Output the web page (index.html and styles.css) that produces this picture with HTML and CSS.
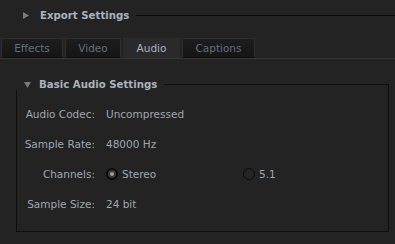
FILE: index.html
```html
<!DOCTYPE html>
<html lang="en">
<head>
    <meta charset="UTF-8">
    <title>Export Settings</title>
    <link rel="stylesheet" href="styles.css">
</head>
<body>
    <div class="header">
        <svg class="tri" width="6" height="7" viewBox="0 0 6 7"><polygon points="0,0 6,3.5 0,7" fill="#7a7a7a"/></svg>
        <span class="title">Export Settings</span>
        <span class="rule"></span>
    </div>

    <div class="tabs">
        <div class="tab tab-effects">Effects</div>
        <div class="tab tab-video">Video</div>
        <div class="tab tab-audio active">Audio</div>
        <div class="tab tab-captions">Captions</div>
    </div>

    <div class="content">
        <fieldset class="group">
            <legend>
                <svg class="tri-down" width="7" height="6" viewBox="0 0 7 6"><polygon points="0,0 7,0 3.5,6" fill="#7a7a7a"/></svg>
                <span>Basic Audio Settings</span>
            </legend>
            <div class="rows">
                <span class="label">Audio Codec:</span>
                <span class="value">Uncompressed</span>

                <span class="label">Sample Rate:</span>
                <span class="value">48000 Hz</span>

                <span class="label">Channels:</span>
                <span class="value radios">
                    <span class="option option-stereo"><span class="radio checked"></span>Stereo</span>
                    <span class="option"><span class="radio"></span>5.1</span>
                </span>

                <span class="label">Sample Size:</span>
                <span class="value">24 bit</span>
            </div>
        </fieldset>
    </div>
</body>
</html>
```

FILE: styles.css
```css
body {
    margin: 0;
    background-color: #232323;
    font-family: 'DejaVu Sans', sans-serif;
    font-size: 10.5px;
    color: #9ea8b2;
}

.header {
    height: 30px;
    display: flex;
    align-items: center;
    padding-left: 23px;
}

.tri {
    margin-right: 11px;
}

.title {
    font-weight: bold;
    font-size: 10.2px;
    color: #a9b3bd;
}

.rule {
    flex: 1;
    height: 1px;
    margin-left: 7px;
    background-color: #0c0c0c;
}

.tabs {
    display: flex;
    margin-top: 8px;
    padding-left: 1px;
    height: 20px;
    border-bottom: 1px solid #353535;
}

.tab {
    box-sizing: border-box;
    height: 20px;
    display: flex;
    align-items: center;
    justify-content: center;
    color: #66707a;
    background: linear-gradient(#1d1d1d, #151515);
    border: 1px solid #2f2f2f;
    border-bottom-color: #0e0e0e;
    margin-right: 2px;
}

.tab.active {
    background: #2a2a2a;
    border-color: #2a2a2a;
    color: #a6b4c2;
}

.tab-effects { width: 62px; }
.tab-video { width: 56px; margin-right: 2px; }
.tab-audio { width: 57px; }
.tab-captions { width: 73px; }

.content {
    padding: 20px 6px 0 16px;
}

.group {
    margin: 0;
    padding: 9px 0 12px 0;
    border: 1px solid #0e0e0e;
    min-width: 0;
}

.group legend {
    display: flex;
    align-items: center;
    padding: 0 7px 0 8px;
    margin-left: -1px;
    font-weight: bold;
    font-size: 10.2px;
    color: #a9b3bd;
}

.tri-down {
    margin-right: 8px;
}

.rows {
    display: grid;
    grid-template-columns: 78px 1fr;
    grid-auto-rows: 30px;
    column-gap: 11px;
    align-items: center;
}

.label {
    text-align: right;
}

.radios {
    display: flex;
    align-items: center;
}

.option {
    display: flex;
    align-items: center;
}

.option-stereo {
    width: 137px;
}

.radio {
    box-sizing: border-box;
    width: 12px;
    height: 12px;
    border-radius: 50%;
    border: 1px solid #0a0a0a;
    background-color: #262626;
    margin-right: 4px;
    display: flex;
    align-items: center;
    justify-content: center;
}

.radio.checked {
    border: 2px solid #0a0a0a;
    background-color: #3a3a3a;
}

.radio.checked::after {
    content: "";
    width: 4px;
    height: 4px;
    border-radius: 50%;
    background-color: #9a9a9a;
}
```
